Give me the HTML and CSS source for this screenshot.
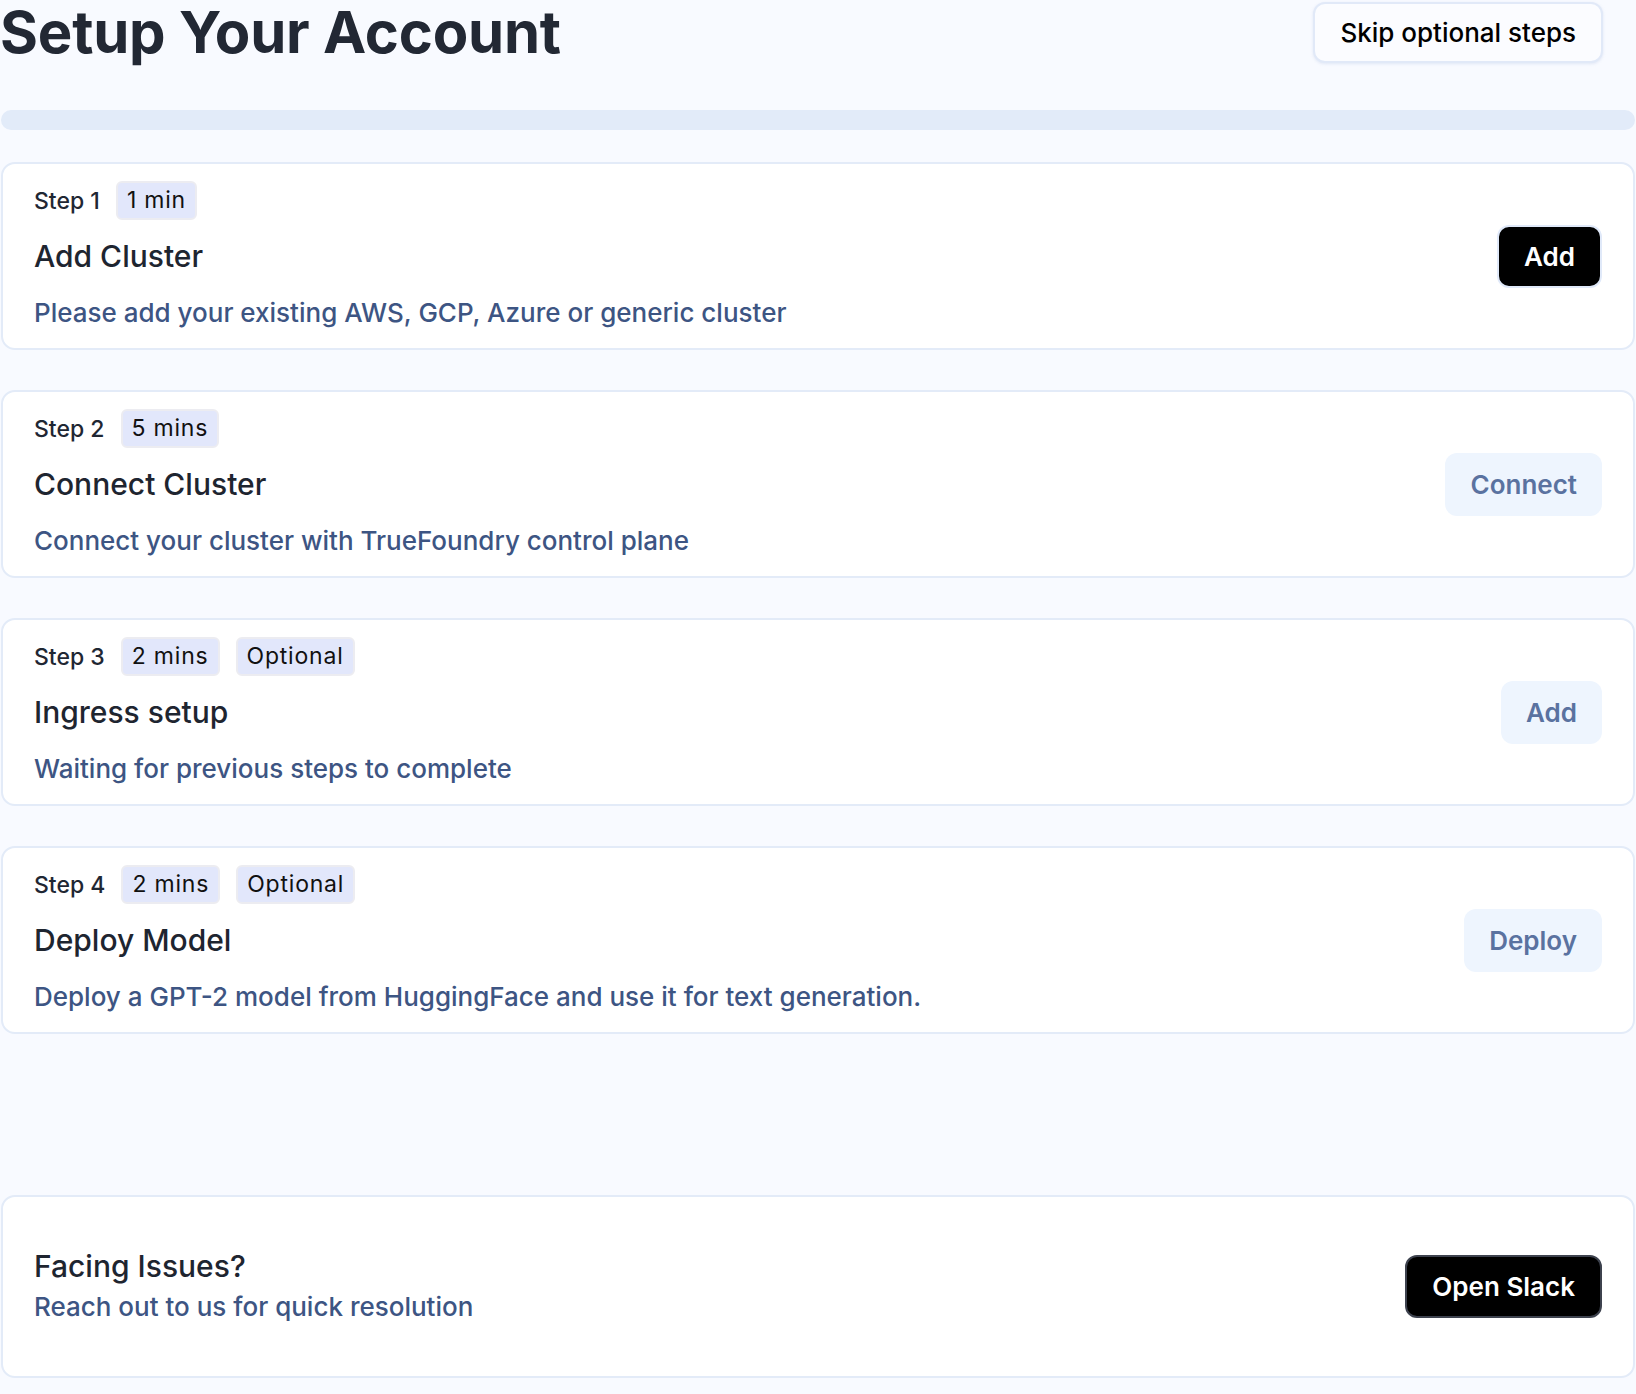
FILE: index.html
```html
<!DOCTYPE html>
<html lang="en">
  <head>
    <meta charset="UTF-8" />
    <meta name="viewport" content="width=device-width, initial-scale=1.0" />
    <title>Setup Your Account</title>
    <link rel="stylesheet" href="styles.css">
  </head>
  <body>
    <main class="page">
      <header class="page-head">
        <h1>Setup Your Account</h1>
        <button class="btn btn-outline">Skip optional steps</button>
      </header>

      <div class="progress"><div class="progress-fill"></div></div>

      <section class="steps">
        <div class="card step">
          <div class="step-info">
            <div class="step-meta">
              <span class="step-num">Step 1</span>
              <span class="tag">1 min</span>
            </div>
            <h2>Add Cluster</h2>
            <p>Please add your existing AWS, GCP, Azure or generic cluster</p>
          </div>
          <button class="btn btn-dark">Add</button>
        </div>

        <div class="card step">
          <div class="step-info">
            <div class="step-meta">
              <span class="step-num">Step 2</span>
              <span class="tag">5 mins</span>
            </div>
            <h2>Connect Cluster</h2>
            <p>Connect your cluster with TrueFoundry control plane</p>
          </div>
          <button class="btn btn-light">Connect</button>
        </div>

        <div class="card step">
          <div class="step-info">
            <div class="step-meta">
              <span class="step-num">Step 3</span>
              <span class="tag">2 mins</span>
              <span class="tag">Optional</span>
            </div>
            <h2>Ingress setup</h2>
            <p>Waiting for previous steps to complete</p>
          </div>
          <button class="btn btn-light">Add</button>
        </div>

        <div class="card step">
          <div class="step-info">
            <div class="step-meta">
              <span class="step-num">Step 4</span>
              <span class="tag">2 mins</span>
              <span class="tag">Optional</span>
            </div>
            <h2>Deploy Model</h2>
            <p>Deploy a GPT-2 model from HuggingFace and use it for text generation.</p>
          </div>
          <button class="btn btn-light">Deploy</button>
        </div>
      </section>

      <section class="card help">
        <div class="help-info">
          <h2>Facing Issues?</h2>
          <p>Reach out to us for quick resolution</p>
        </div>
        <button class="btn btn-dark btn-slack">Open Slack</button>
      </section>
    </main>
  </body>
</html>
```

FILE: styles.css
```css
html {
    color: #1e2530;
    font-family: Inter, "Noto Sans", sans-serif;
}

body {
    margin: 0;
    background: #f8faff;
}

.page {
    padding: 0 1px 20px 1px;
}

.page-head {
    display: flex;
    justify-content: space-between;
    align-items: center;
    padding-right: 32px;
}

h1 {
    margin: 0 0 0 -1px;
    font-size: 58px;
    line-height: 64px;
    font-weight: 700;
    letter-spacing: -0.2px;
    color: #222834;
}

.btn {
    font-family: inherit;
    font-size: 26px;
    font-weight: 600;
    height: 63px;
    padding: 0 25px;
    border-radius: 12px;
    cursor: pointer;
}

.btn-outline {
    height: 61px;
    font-weight: 500;
    color: #000;
    background: #fbfcff;
    border: 2px solid #e1e9f8;
    box-shadow: 0 1px 3px rgba(180, 195, 225, 0.35);
}

.btn-dark {
    color: #fff;
    background: #000;
    border: 2px solid #e0e9f9;
}

.btn-slack {
    border-color: #3d424e;
}

.btn-light {
    color: #5a72a0;
    background: #eef5fe;
    border: none;
}

.progress {
    margin-top: 46px;
    height: 20px;
    border-radius: 10px;
    background: #e2ebf9;
}

.steps {
    margin-top: 32px;
    display: flex;
    flex-direction: column;
    gap: 40px;
}

.card {
    background: #fff;
    border: 2px solid #e3ebf8;
    border-radius: 14px;
    display: flex;
    justify-content: space-between;
    align-items: center;
}

.step {
    padding: 17px 31px 17px 31px;
}

.step-info {
    display: flex;
    flex-direction: column;
}

.step-meta {
    display: flex;
    align-items: center;
    gap: 16px;
}

.step-info h2 {
    margin-top: 16px;
}

.step-info p {
    margin-top: 19px;
}

.step-num {
    font-size: 23px;
    font-weight: 500;
    color: #1f2733;
}

.tag {
    height: 35px;
    line-height: 35px;
    padding: 0 9px;
    font-size: 23px;
    letter-spacing: 0.8px;
    color: #111;
    background: #e2e7fb;
    border: 2px solid #ececf1;
    border-radius: 6px;
}

h2 {
    margin: 0;
    font-size: 30px;
    line-height: 40px;
    font-weight: 500;
    color: #1e2530;
}

p {
    margin: 0;
    font-size: 26px;
    line-height: 36px;
    font-weight: 450;
    color: #3d5583;
}

.help {
    margin-top: 161px;
    padding: 51px 31px;
}

.help h2 {
    line-height: 36px;
}

.help-info {
    display: flex;
    flex-direction: column;
    gap: 5px;
}
```
